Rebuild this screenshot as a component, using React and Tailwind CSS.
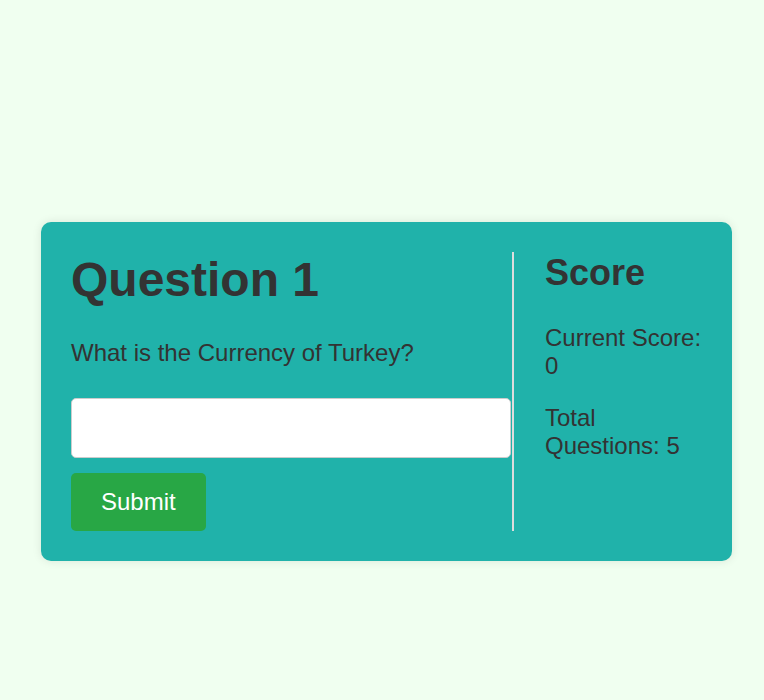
import React, { useState } from "react";

export default function App() {
  const [answer, setAnswer] = useState("");

  return (
    <div className="min-h-[700px] bg-[#f0fff0] pt-[222px] pl-[41px] font-['Liberation_Sans',Arial,sans-serif] text-[#333]">
      <div className="flex w-[691px] rounded-[10px] bg-[#20b2aa] p-[30px] shadow-[0_0_10px_rgba(0,0,0,0.1)]">
        <div className="w-[443px] shrink-0 border-r-2 border-[#ddd]">
          <h1 className="mb-8 text-[48px] font-bold leading-[normal]">Question 1</h1>
          <p className="mb-[31px] text-[24px] leading-[normal]">What is the Currency of Turkey?</p>
          <input
            type="text"
            value={answer}
            onChange={(e) => setAnswer(e.target.value)}
            className="block h-[60px] w-[440px] rounded-[5px] border border-[#ccc] bg-white px-3 text-[24px] outline-none"
          />
          <button
            type="button"
            className="mt-[15px] rounded-[5px] bg-[#28a745] px-[30px] py-[15px] text-[24px] leading-[normal] text-white"
          >
            Submit
          </button>
        </div>

        <div className="flex-1 pl-[31px]">
          <h2 className="mb-[30px] text-[36px] font-bold leading-[normal]">Score</h2>
          <p className="mb-6 text-[24px] leading-[normal]">Current Score: 0</p>
          <p className="text-[24px] leading-[normal]">Total Questions: 5</p>
        </div>
      </div>
    </div>
  );
}
